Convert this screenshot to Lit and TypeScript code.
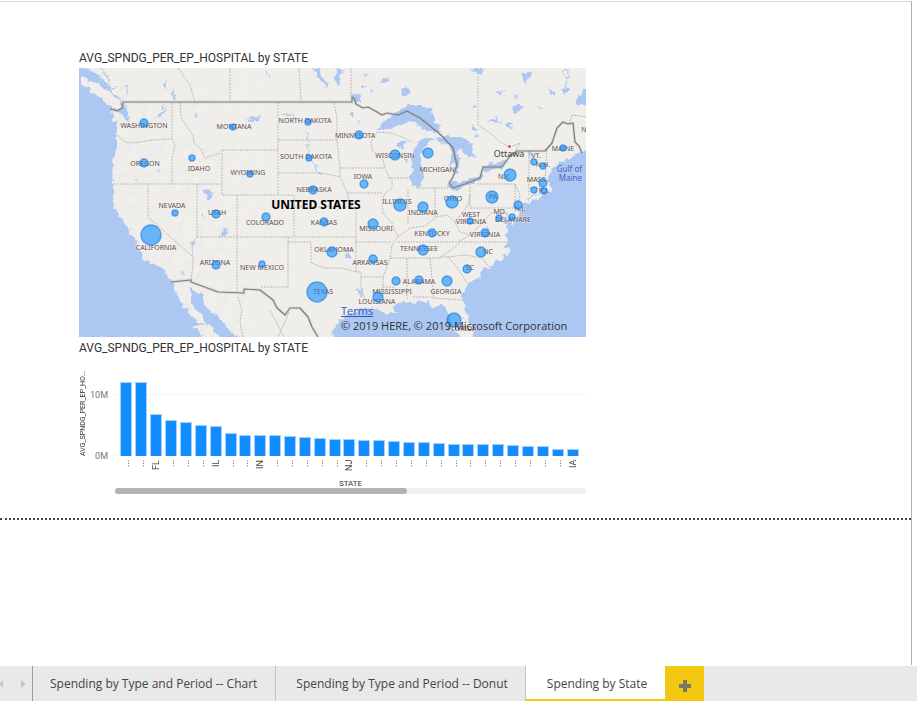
import { LitElement, html, svg, css } from "lit";
import { customElement, state } from "lit/decorators.js";

type Label = [text: string, x: number, y: number];
type Bubble = [x: number, y: number, r: number];

const OCEAN_POLYGONS: string[] = [
  // Pacific coast
  "70,60 84,60 86,68 92,74 98,78 102,83 107,88 112,92 120,98 124,104 126,110 129,116 127,122 124,116 120,112 111,110 113,120 117,129 116,145 113,162 112,175 114,190 113,202 120,218 124,221 128,230 135,240 140,249 142,257 145,261 152,263 160,266 165,270 171,281 178,297 182,303 185,308 192,314 197,322 203,324 192,327 198,331 202,337 206,346 70,346",
  // Gulf of California
  "190,287 195,291 204,296 204,305 211,313 217,315 227,327 230,332 238,337 244,346 222,346 219,337 214,330 206,323 203,315 197,312 190,300",
  // Gulf of Mexico
  "333,346 333,337 332,332 336,325 340,321 350,315 356,312 360,308 367,309 373,307 380,311 387,314 391,312 397,314 393,307 398,303 403,302 410,301 414,304 420,301 427,301 431,307 436,307 442,304 446,309 449,316 451,323 454,330 460,337 462,346",
  // Atlantic
  "475,346 474,337 473,330 470,322 466,311 463,303 462,295 464,289 469,284 476,278 482,273 486,268 492,266 496,261 503,260 504,254 508,255 510,249 505,247 508,242 506,235 508,228 505,222 507,215 510,222 512,227 515,219 519,213 521,208 525,203 527,197 534,195 541,193 545,190 551,192 553,189 548,184 548,177 551,172 555,166 563,161 571,157 580,153 586,148 595,143 595,346",
  // St. Lawrence
  "595,80 586,88 582,93 577,99 577,103 586,106 595,108",
  // Lake Superior
  "377,130 383,123 390,117 398,110 405,107 410,105 420,105 430,110 434,115 433,121 438,124 442,132 430,132 421,128 415,122 408,122 403,124 396,126 390,130 383,129",
  // Lake Michigan
  "420,141 414,150 411,158 413,166 410,178 412,186 417,189 422,183 424,172 420,163 421,154 427,144 434,139 426,138",
  // Lake Huron
  "434,138 447,137 460,137 466,139 473,146 475,157 468,157 461,148 456,152 460,160 458,172 455,174 454,164 449,166 453,153 448,144 438,142",
  // Lake Erie
  "448,187 452,181 459,183 467,180 482,175 480,180 463,187 453,191",
  // Lake Ontario
  "483,167 490,163 500,162 507,159 503,167 495,170 485,171",
];

const ISLANDS: string[] = [
  "80,78 85,79 90,81 96,83 102,87 107,90 112,95 117,98 122,102 121,108 113,108 108,105 100,98 95,95 90,90 83,84",
  "522,200 532,197 539,194 548,193 538,199 526,203",
  "462,330 467,331 467,335 461,334",
];

const LAKES: string[] = [
  "86,72 98,78 108,90 116,97 109,87 100,76 93,71",
  "160,115 164,110 167,104 165,112 163,117 155,118",
  "163,84 167,80 164,92", "172,87 175,97 174,101 172,95", "195,112 197,115 196,119",
  "204,188 211,189 213,197 209,199 205,193", "220,234 227,227 226,233 219,238",
  "190,243 197,241 192,248", "312,68 320,68 322,76 328,84 326,87 321,82",
  "337,68 342,69 341,78 337,86 335,78", "352,95 360,94 360,101 354,102",
  "401,88 407,86 409,96 404,98", "363,75 367,73 365,79", "383,80 390,76 388,82 381,83",
  "370,91 375,90 370,94", "360,86 366,85 362,88", "350,112 354,112 352,117", "356,123 359,121 358,125",
  "245,119 254,118 260,114 259,120 250,121", "281,113 292,114 285,116",
  "470,68 485,68 482,74 476,73", "522,74 532,71 531,77 525,84 522,80",
  "512,107 519,104 524,107 519,112 513,112", "537,106 542,108 539,110",
  "487,121 497,118 502,122 493,121", "505,124 511,121 512,129 507,128", "494,92 505,90 500,96",
  "472,105 478,106 474,108", "561,90 568,87 568,94 563,93", "548,85 552,92 557,95 550,95",
  "472,125 478,129 476,132 472,129", "473,136 480,135 477,137", "514,94 518,96 515,98",
  "398,142 406,139 404,149 398,146", "405,160 408,160 406,164", "529,151 531,151 530,163",
  "347,254 351,252 349,259 346,258", "359,293 363,288 362,297", "181,270 185,275 182,275",
  "134,178 138,180 135,181", "156,169 160,170 157,171",
];

const RIVERS: string[] = [
  "M307 131 l1 8 l-1 6 l2 5 l-1 8 l6 4 l2 6 l6 6",
  "M100 68 l8 9 l4 8 M104 81 l8 8 l6 -2 M125 86 l4 10 M124 101 l4 6",
  "M161 111 l3 -7 M267 70 l2 8 l-2 2 M292 114 l5 7",
  "M565 70 l4 2 l-1 6 l-4 -3 l1 -5 M567 79 l-2 14",
  "M486 226 l3 9 M511 220 l-4 -8 M506 225 l3 8 l-2 10",
  "M128 226 l4 4 M202 213 l1 6 M356 289 l4 4 M463 318 l5 11",
];

const STATE_LINES = [
  "M117 135 L125 142 L133 143 L153 140 L172 139", "M172 103 V139 L175 145 L172 158 V184", "M114 184 H222",
  "M180 102 L181 117 L187 127 L193 135 L194 143 L200 148 L205 158 L220 153", "M222 150 H278 M222 150 V195 H294 V237",
  "M278 102 V195 M278 140 H337 M278 173 H322 L340 177 L347 192 L350 205 L356 212 V272",
  "M334 103 L337 118 V140 L340 168 V177 M340 168 H385", "M412 142 L404 138 L392 133 L377 132 L371 142 L372 150 L383 160 L385 168 L387 173 L392 180 V188 L385 193 L382 200 L383 213 L392 223 L398 237 L392 245 L390 258 L387 267 L383 277 V287 L378 300",
  "M388 178 H412 M347 193 H382 M294 207 H350 M237 237 H356", "M288 237 V287 H260 M288 242 H311 V263 L325 268 L340 268 L358 272 H361 V287 L365 300 M361 277 H383 M383 287 H395",
  "M356 242 H392 M390 258 H440 L460 243 M398 242 H508 M407 258 V300 M430 258 L433 290 V297 H413 M433 298 L462 300",
  "M440 257 L448 257 L457 267 L467 283 M448 257 L465 255 L482 258 L490 268", "M398 237 L410 228 L425 226 L436 217 L447 215 L455 222 L463 212 L468 205 L470 195 M408 189 V225 M435 188 V217 M417 188 H448",
  "M470 178 V208 H517 M477 184 H515 L520 195 L517 208 M455 222 L460 232 L470 235 L480 225 L492 212 L500 215 L508 222 M470 235 L458 242 M515 184 V209",
  "M529 151 V195 M547 150 L545 180 M529 180 H548 M530 188 H545", "M148 184 V217 L193 257 V265 L191 280 M197 184 V237 L192 245 L193 257 M197 237 H237 V293 M237 195 V237",
  "M178 68 L190 85 L195 102 M230 68 V102 M299 68 L301 102 M351 68 V97", "M478 73 V125 L490 133 L500 142 L510 147 L520 143 L516 150 M569 124 L572 115 L586 117",
  "M238 297 L242 310 L240 322 L243 337 M194 324 H208 M270 310 L284 337 M289 312 L278 337",
].join(" ");

const NATIONAL_LINES = [
  "M110 109 L117 111 L122 108 L123 103",
  "M122 102 H352 V97 L354 98 L356 104 L363 108 L368 107 L377 112 L382 115 L387 113 L398 115 L407 111 L420 118 L430 126 L436 131 L442 136 L453 148 L457 165 L453 177 L449 183 L453 188 L465 184 L480 178 L483 167 H502 L510 156 L517 151 H545 L552 143 L557 128 L563 122 L568 124 L573 123 L575 142 L579 146 L582 153",
  "M171 282 L191 280 V282 L218 292 L244 293 V289 L260 290 L273 300 L277 308 L285 315 L290 308 L300 308 L308 317 L312 327 L318 337",
].join(" ");

const LABELS: Label[] = [
  ["WASHINGTON", 144, 128], ["OREGON", 145, 166], ["IDAHO", 199, 171], ["MONTANA", 234, 129],
  ["WYOMING", 248, 175], ["NORTH DAKOTA", 305, 123], ["SOUTH DAKOTA", 306, 159], ["MINNESOTA", 355, 138],
  ["WISCONSIN", 395, 158], ["IOWA", 363, 179], ["NEBRASKA", 314, 192], ["MICHIGAN", 437, 172],
  ["NEVADA", 172, 208], ["UTAH", 217, 215], ["COLORADO", 265, 225], ["KANSAS", 324, 225],
  ["MISSOURI", 376, 231], ["ILLINOIS", 397, 204], ["INDIANA", 423, 215], ["OHIO", 453, 201],
  ["CALIFORNIA", 156, 250], ["ARIZONA", 215, 265], ["NEW MEXICO", 262, 270], ["OKLAHOMA", 334, 252],
  ["ARKANSAS", 370, 265], ["TEXAS", 323, 294], ["LOUISIANA", 377, 304], ["MISSISSIPPI", 392, 294],
  ["ALABAMA", 419, 284], ["GEORGIA", 446, 294], ["TENNESSEE", 419, 251], ["KENTUCKY", 432, 236],
  ["WEST", 471, 217], ["VIRGINIA", 471, 224], ["VIRGINIA", 485, 237], ["MD.", 500, 214],
  ["DELAWARE", 513, 222], ["N.J.", 520, 211], ["PA", 493, 199], ["NC", 488, 254], ["SC", 470, 270],
  ["N.Y.", 504, 179], ["MASS.", 537, 182], ["VT.", 536, 158], ["N.H.", 543, 167], ["MAINE", 563, 151],
  ["R.I.", 544, 193], ["FLORIDA", 462, 331], ["N", 584, 132],
];

const BUBBLES: Bubble[] = [
  [144, 123, 4], [144, 163, 4], [192, 158, 3], [233, 127, 3], [250, 174, 3], [308, 122, 3], [309, 158, 3],
  [359, 135, 4], [395, 155, 5], [364, 184, 4], [313, 190, 4], [428, 153, 5], [175, 213, 3], [216, 214, 4],
  [266, 217, 4], [324, 222, 4], [373, 224, 5], [400, 205, 6], [423, 207, 5], [452, 202, 6], [151, 235, 10],
  [216, 265, 4], [262, 264, 3], [332, 252, 5], [373, 259, 4], [317, 292, 10], [378, 297, 5], [396, 281, 4],
  [419, 280, 4], [447, 281, 5], [423, 250, 5], [432, 233, 4], [470, 221, 3], [485, 233, 4], [499, 218, 3],
  [512, 217, 3], [518, 205, 4], [492, 197, 6], [481, 252, 5], [467, 269, 4], [510, 175, 6], [534, 162, 3],
  [543, 166, 3], [543, 183, 4], [534, 190, 3], [544, 191, 3], [563, 148, 3], [454, 320, 7],
];

const BARS: { label: string; value: number }[] = [
  12.1, 12.0, 6.8, 5.8, 5.5, 5.0, 4.9, 3.7, 3.5, 3.4, 3.4, 3.3, 3.1, 2.9, 2.8, 2.8, 2.6, 2.6, 2.4, 2.3, 2.3,
  2.1, 2.0, 2.0, 2.0, 1.9, 1.8, 1.6, 1.6, 1.2, 1.2,
].map((value, i) => ({
  value,
  label: ({ 2: "FL", 6: "IL", 9: "IN", 15: "NJ", 30: "IA" } as Record<number, string>)[i] ?? "...",
}));

const AXIS_MAX = 15;

@customElement("spending-map")
class SpendingMap extends LitElement {
  static styles = css`
    :host { display: block; position: relative; }
    .map { display: block; width: 100%; height: auto; background: #efeeea; }
    .sea { fill: #abc7f2; }
    .land { fill: #efeeea; }
    .river { fill: none; stroke: #abc7f2; stroke-width: 1; }
    .state-line { fill: none; stroke: #bebab6; stroke-width: 1; stroke-dasharray: 2 1; }
    .nation-line { fill: none; stroke: #7e7e7e; stroke-width: 1.2; stroke-linejoin: round; }
    .nation-glow { fill: none; stroke: #a8a8a8; stroke-opacity: 0.25; stroke-width: 3; }
    .name { font: 7px "Noto Sans", sans-serif; fill: #5e4a4a; text-anchor: middle; paint-order: stroke; stroke: #f6f5f2; stroke-opacity: 0.7; stroke-width: 1; }
    .country { font: bold 12px "Noto Sans", sans-serif; fill: #000; text-anchor: middle; }
    .city { font: 9px "Noto Sans", sans-serif; fill: #444; text-anchor: middle; }
    .gulf { font: 8px "Noto Sans", sans-serif; fill: #4466c0; text-anchor: end; }
    .capital { fill: #e02020; }
    .bubble { fill: #118dff; fill-opacity: 0.6; stroke: #1178dd; stroke-opacity: 0.6; stroke-width: 1.4; }
    .credits { position: absolute; left: 262px; right: 0; bottom: 4px; font: 11px/15px "Open Sans", sans-serif; color: #333; white-space: nowrap; }
    .terms { color: #3a55b8; text-decoration: underline; display: table; }
  `;

  render() {
    return html`
      <svg class="map" viewBox="79 68 507 269" role="img" aria-label="Map of average spending per episode by state">
        <defs>
          <filter id="relief" x="0" y="0" width="100%" height="100%">
            <feTurbulence type="fractalNoise" baseFrequency="0.09" numOctaves="4" seed="4" result="noise" />
            <feDiffuseLighting in="noise" surfaceScale="1.6" lighting-color="#ffffff">
              <feDistantLight azimuth="225" elevation="60" />
            </feDiffuseLighting>
          </filter>
          <filter id="shore" filterUnits="userSpaceOnUse" x="70" y="60" width="525" height="286" color-interpolation-filters="sRGB">
            <feTurbulence type="fractalNoise" baseFrequency="0.16" numOctaves="3" seed="7" result="noise" />
            <feDisplacementMap in="SourceGraphic" in2="noise" scale="7" xChannelSelector="R" yChannelSelector="G" />
          </filter>
          <linearGradient id="fade" x1="0" x2="1">
            <stop offset="0" stop-color="#fff" /><stop offset="0.65" stop-color="#fff" /><stop offset="1" stop-color="#000" />
          </linearGradient>
          <mask id="west"><rect x="79" y="68" width="215" height="269" fill="url(#fade)" /></mask>
        </defs>
        <g mask="url(#west)" opacity="0.14"><rect x="79" y="68" width="215" height="269" filter="url(#relief)" /></g>
        <g filter="url(#shore)">
          ${OCEAN_POLYGONS.map((p) => svg`<polygon class="sea" points=${p} />`)}
          ${LAKES.map((p) => svg`<polygon class="sea" points=${p} />`)}
          ${ISLANDS.map((p) => svg`<polygon class="land" points=${p} />`)}
          ${RIVERS.map((d) => svg`<path class="river" d=${d} />`)}
        </g>
        <path class="state-line" d=${STATE_LINES} />
        <path class="nation-glow" d=${NATIONAL_LINES} />
        <path class="nation-line" d=${NATIONAL_LINES} />
        ${LABELS.map(([t, x, y]) => svg`<text class="name" x=${x} y=${y}>${t}</text>`)}
        <text class="city" x="509" y="157">Ottawa</text>
        <circle class="capital" cx="509.500" cy="146.500" r="1.200" />
        <text class="gulf" x="582" y="172">Gulf of</text>
        <text class="gulf" x="582" y="181">Maine</text>
        <text class="country" x="316" y="209">UNITED STATES</text>
        ${BUBBLES.map(([x, y, r]) => svg`<circle class="bubble" cx=${x} cy=${y} r=${r} />`)}
      </svg>
      <div class="credits">
        <a class="terms" href="#terms">Terms</a>
        <span>© 2019 HERE, © 2019 Microsoft Corporation</span>
      </div>
    `;
  }
}

@customElement("spending-bars")
class SpendingBars extends LitElement {
  static styles = css`
    :host { display: grid; grid-template-columns: 9px 27px minmax(0, 1fr); font-family: Roboto, sans-serif; color: #555; }
    .y-title { writing-mode: vertical-rl; transform: rotate(180deg); font-size: 7px; line-height: 9px; height: 92px; white-space: nowrap; color: #333; }
    .y-axis { position: relative; height: 92px; font-size: 9px; line-height: 12px; }
    .tick { position: absolute; right: 7px; transform: translateY(50%); color: #777; }
    .plot { position: relative; height: 92px; display: grid; grid-auto-flow: column; grid-auto-columns: minmax(0, 1fr); align-items: end; padding: 0 6px 0 4px; }
    .rule { position: absolute; left: 0; right: 0; height: 0; border-top: 1px dotted #ededed; }
    .bar { position: relative; justify-self: center; width: 12px; box-sizing: border-box; background: #118dff; border: solid #a3d1ff; border-width: 1px 1px 0; }
    .labels { grid-column: 3; display: grid; grid-auto-flow: column; grid-auto-columns: minmax(0, 1fr); padding: 4px 6px 0 4px; height: 20px; }
    .label { writing-mode: vertical-rl; transform: rotate(180deg); justify-self: center; text-align: right; font-size: 9px; line-height: 12px; color: #444; }
    .x-title { grid-column: 3; text-align: center; font-size: 8px; line-height: 8px; color: #333; }
    .track { grid-column: 3; height: 6px; border-radius: 3px; background: #f0f0f0; }
    .thumb { width: 62%; height: 6px; border-radius: 3px; background: #b3b3b3; }
  `;

  render() {
    const pct = (v: number) => (v / AXIS_MAX) * 100;
    return html`
      <div class="y-title">AVG_SPNDG_PER_EP_HO...</div>
      <div class="y-axis">
        ${[0, 10].map((v) => html`<span class="tick" style="bottom:${pct(v)}%">${v}M</span>`)}
      </div>
      <div class="plot">
        ${[0, 10].map((v) => html`<div class="rule" style="bottom:${pct(v)}%"></div>`)}
        ${BARS.map((b) => html`<div class="bar" style="height:${pct(b.value)}%"></div>`)}
      </div>
      <div class="labels">${BARS.map((b) => html`<span class="label">${b.label}</span>`)}</div>
      <div class="x-title">STATE</div>
      <div class="track"><div class="thumb"></div></div>
    `;
  }
}

@customElement("app-root")
class AppRoot extends LitElement {
  static styles = css`
    :host { display: flex; flex-direction: column; min-height: 100vh; background: #fff; font-family: "Noto Sans", sans-serif; }
    .page { flex: 1; display: flex; flex-direction: column; border-top: 1px solid #d9d9d9; margin: 1px 5px 1px 0; border-right: 1px solid #b0b0b0; }
    .canvas { padding: 48px 20px 24px 79px; border-bottom: 2px dotted #444; }
    .visuals { max-width: 507px; }
    .title { margin: 0; font: 12px/16px Roboto, sans-serif; color: #333; white-space: nowrap; }
    .map-title { padding-bottom: 2px; }
    .bars-title { padding: 3px 0 8px; }
    .tabs { display: flex; height: 35px; background: #e9e9e9; }
    button { font: inherit; border: 0; margin: 0; padding: 0; background: none; cursor: pointer; }
    .pager { display: flex; align-items: center; justify-content: space-between; width: 32px; box-sizing: border-box; padding-right: 6px; }
    .arrow { display: flex; }
    .arrow svg { display: block; fill: #c6c6c6; }
    .tab { font-family: "Open Sans", sans-serif; font-size: 12px; line-height: 16px; color: #444; padding: 0 18px 0 17px; border-left: 1px solid #c3c3c3; white-space: nowrap; }
    .tab:nth-of-type(1) { border-left-color: #9c9c9c; }
    .tab + .tab { padding: 0 17px 0 20px; }
    .tab + .tab.active { background: #fff; box-shadow: inset 0 -2px #f2c811; padding: 0 18px 0 21px; }
    .add { width: 39px; background: #f2c811; display: flex; align-items: center; justify-content: center; padding-top: 4px; }
  `;

  @state() private active = 2;
  private tabs = ["Spending by Type and Period -- Chart", "Spending by Type and Period -- Donut", "Spending by State"];

  render() {
    return html`
      <main class="page">
        <section class="canvas">
          <div class="visuals">
            <h2 class="title map-title">AVG_SPNDG_PER_EP_HOSPITAL by STATE</h2>
            <spending-map></spending-map>
            <h2 class="title bars-title">AVG_SPNDG_PER_EP_HOSPITAL by STATE</h2>
            <spending-bars></spending-bars>
          </div>
        </section>
      </main>
      <nav class="tabs" aria-label="Report pages">
        <div class="pager">
          <button class="arrow" aria-label="Previous page"><svg width="4" height="8"><path d="M3 0 V8 L-1 4 Z" /></svg></button>
          <button class="arrow" aria-label="Next page"><svg width="5" height="8"><path d="M0 0 V8 L5 4 Z" /></svg></button>
        </div>
        ${this.tabs.map(
          (t, i) => html`<button class="tab ${i === this.active ? "active" : ""}" @click=${() => (this.active = i)}>${t}</button>`,
        )}
        <button class="add" aria-label="New page">
          <svg width="12" height="12"><path d="M4 0 H8 V4 H12 V8 H8 V12 H4 V8 H0 V4 H4 Z" fill="#7a7668" /></svg>
        </button>
      </nav>
    `;
  }
}
